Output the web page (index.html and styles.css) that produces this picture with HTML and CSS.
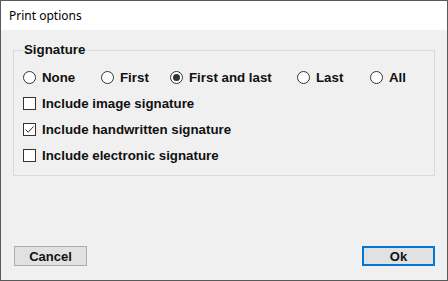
FILE: index.html
```html
<!DOCTYPE html>
<html lang="en">
<head>
  <meta charset="UTF-8" />
  <title>Print options</title>
  <link rel="stylesheet" href="styles.css">
</head>
<body>
  <div class="window">
    <div class="titlebar">Print options</div>

    <div class="content">
      <fieldset class="group">
        <legend>Signature</legend>

        <div class="radio-row">
          <label class="option"><span class="radio"></span>None</label>
          <label class="option"><span class="radio"></span>First</label>
          <label class="option"><span class="radio checked"></span>First and last</label>
          <label class="option"><span class="radio"></span>Last</label>
          <label class="option"><span class="radio"></span>All</label>
        </div>

        <label class="option check-row"><span class="check"></span>Include image signature</label>
        <label class="option check-row">
          <span class="check">
            <svg width="11" height="11" viewBox="0 0 11 11"><path d="M1.5 5.5 L4.2 8.2 L9.5 2.5" fill="none" stroke="#333" stroke-width="1"/></svg>
          </span>Include handwritten signature
        </label>
        <label class="option check-row"><span class="check"></span>Include electronic signature</label>
      </fieldset>

      <div class="footer">
        <button class="btn">Cancel</button>
        <button class="btn btn-default">Ok</button>
      </div>
    </div>
  </div>
</body>
</html>
```

FILE: styles.css
```css
body {
  margin: 0;
  background: #ffffff;
}

.window {
  width: 448px;
  height: 281px;
  box-sizing: border-box;
  border: 1px solid #595959;
  display: flex;
  flex-direction: column;
  background: #f0f0f0;
}

.titlebar {
  height: 29px;
  background: #ffffff;
  font-family: "Noto Sans", sans-serif;
  font-size: 12px;
  color: #000;
  line-height: 29px;
  padding-left: 8px;
}

.content {
  flex: 1;
  display: flex;
  flex-direction: column;
  padding: 12px 12px 14px 12px;
  font-family: "Liberation Sans", Arial, sans-serif;
  font-size: 13.3px;
  font-weight: bold;
  color: #111;
}

.group {
  margin: 0;
  border: 1px solid #dadada;
  padding: 2px 9px 11px 9px;
  min-width: 0;
}

.group legend {
  padding: 0 1px;
  line-height: 16px;
}

.option {
  display: flex;
  align-items: center;
  gap: 6px;
  height: 18px;
  white-space: nowrap;
}

.radio-row {
  display: grid;
  grid-template-columns: 78px 69px 127px 73px auto;
  margin-top: 8px;
}

.check-row {
  margin-top: 8px;
}

.radio {
  width: 11px;
  height: 11px;
  border: 1px solid #333;
  border-radius: 50%;
  background: #fff;
  flex: none;
  display: flex;
  align-items: center;
  justify-content: center;
}

.radio.checked::after {
  content: "";
  width: 7px;
  height: 7px;
  border-radius: 50%;
  background: #333;
}

.check {
  width: 11px;
  height: 11px;
  border: 1px solid #333;
  background: #fff;
  flex: none;
  display: flex;
}

.footer {
  margin-top: auto;
  display: flex;
  justify-content: space-between;
  padding: 0 0 0 1px;
}

.btn {
  width: 73px;
  height: 20px;
  box-sizing: border-box;
  background: #e1e1e1;
  border: 1px solid #adadad;
  font-family: "Liberation Sans", Arial, sans-serif;
  font-size: 13px;
  font-weight: bold;
  color: #111;
  padding: 0;
}

.btn-default {
  border: 2px solid #0078d7;
}
```
